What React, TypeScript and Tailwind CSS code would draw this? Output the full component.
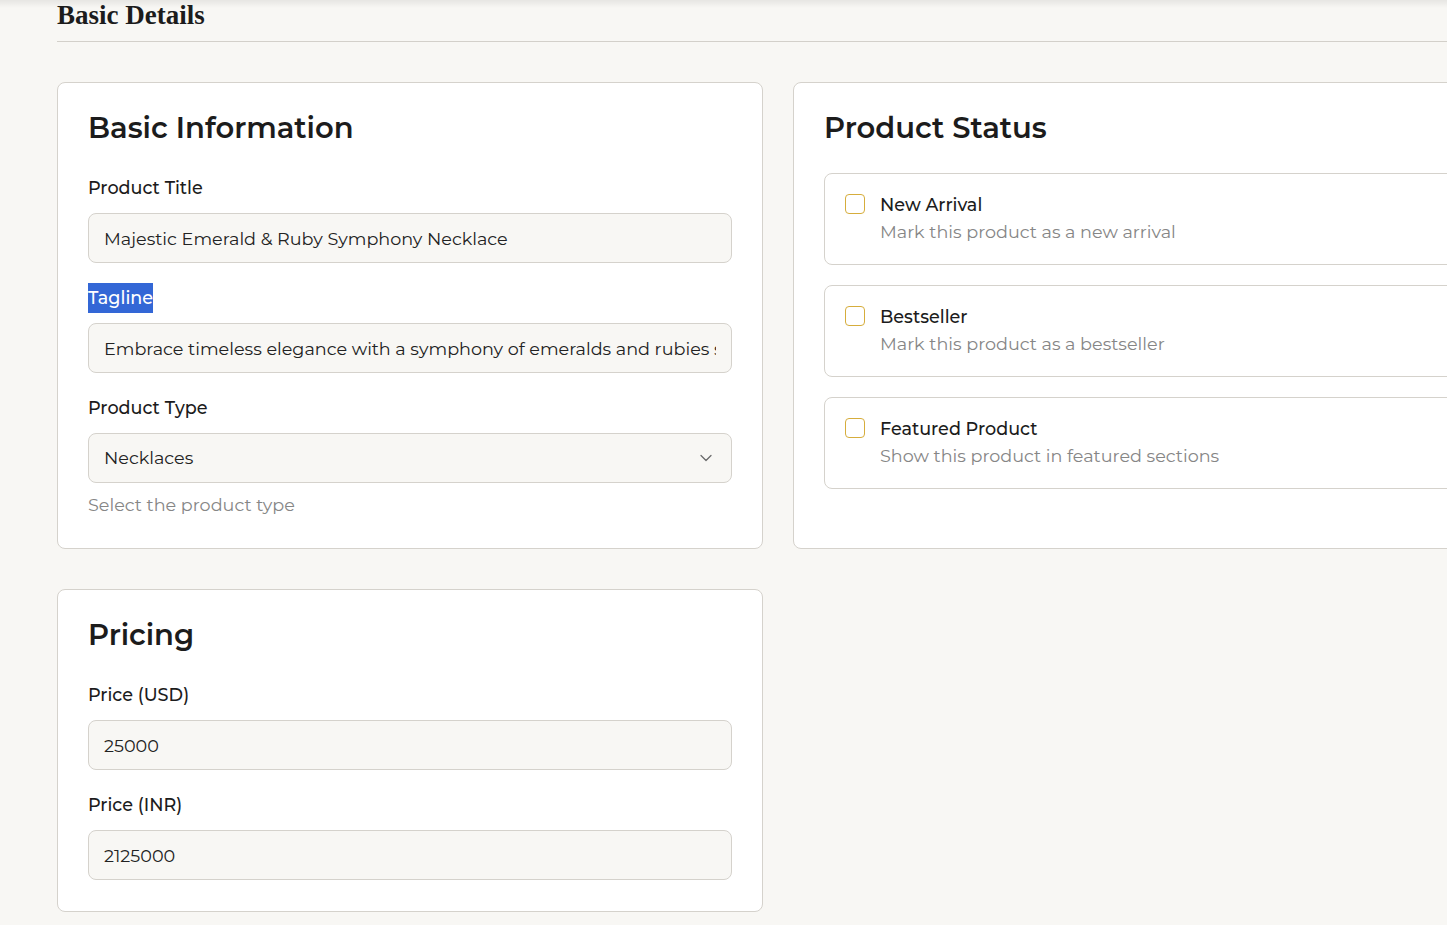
import React from "react";
import { ChevronDown } from "lucide-react";

const sans = "font-['Montserrat','Noto_Sans',sans-serif]";

function Field({ label, value, highlight }: { label: string; value: string; highlight?: boolean }) {
  return (
    <div className="flex flex-col">
      <label className="text-[17.6px] font-medium leading-[30px] text-[#1c1c1c] mb-2.5">
        {highlight ? <span className="inline-block bg-[#3367d6] leading-[30px] text-white">{label}</span> : label}
      </label>
      <input
        readOnly
        value={value}
        className="h-[50px] w-full rounded-lg border border-[#d5d2cc] bg-[#f8f7f4] px-[15px] text-[17.6px] text-[#222] outline-none"
      />
    </div>
  );
}

function Card({ title, children }: { title: string; children: React.ReactNode }) {
  return (
    <div className="rounded-lg border border-[#d5d2cc] bg-white px-[30px] pt-[27px] pb-[31px]">
      <h2 className="text-[29px] font-semibold leading-[36px] text-[#1c1c1c] mb-[27px]">{title}</h2>
      {children}
    </div>
  );
}

function StatusItem({ title, desc }: { title: string; desc: string }) {
  return (
    <div className="flex items-start rounded-lg border border-[#d5d2cc] bg-white px-5 pt-[19px] pb-[20px]">
      <div className="mt-[1px] h-5 w-5 shrink-0 rounded-[4px] border border-[#d6ad3c] bg-white" />
      <div className="ml-[15px] flex flex-col">
        <span className="text-[17.6px] font-medium leading-6 text-[#1c1c1c]">{title}</span>
        <span className="mt-[3px] text-[17.6px] leading-6 text-[#868686]">{desc}</span>
      </div>
    </div>
  );
}

export default function App() {
  return (
    <div className={`relative min-h-screen w-full overflow-hidden bg-[#f8f7f4] ${sans}`}>
      <div className="pointer-events-none absolute left-0 right-0 top-0 h-[8px] bg-gradient-to-b from-[rgba(0,0,0,0.07)] to-transparent" />
      <div className="ml-[57px] w-[1442px]">
        <div className="border-b border-[#d3d0ca] pb-[11px]">
          <h1 className="font-['Liberation_Serif','DejaVu_Serif',serif] text-[27px] font-bold leading-[30px] text-[#1c1c1c]">
            Basic Details
          </h1>
        </div>
        <div className="mt-10 grid grid-cols-2 gap-x-[30px] gap-y-[40px]">
          <Card title="Basic Information">
            <div className="flex flex-col gap-5">
              <Field label="Product Title" value="Majestic Emerald & Ruby Symphony Necklace" />
              <Field
                label="Tagline"
                highlight
                value="Embrace timeless elegance with a symphony of emeralds and rubies set in gold"
              />
              <div className="flex flex-col">
                <label className="text-[17.6px] font-medium leading-[30px] text-[#1c1c1c] mb-2.5">Product Type</label>
                <div className="flex h-[50px] items-center justify-between rounded-lg border border-[#d5d2cc] bg-[#f8f7f4] px-[15px]">
                  <span className="text-[17.6px] text-[#222]">Necklaces</span>
                  <ChevronDown size={20} strokeWidth={1.5} className="text-[#6b6b6b]" />
                </div>
                <p className="mt-2.5 text-[17.6px] leading-6 text-[#868686]">Select the product type</p>
              </div>
            </div>
          </Card>
          <Card title="Product Status">
            <div className="flex flex-col gap-5">
              <StatusItem title="New Arrival" desc="Mark this product as a new arrival" />
              <StatusItem title="Bestseller" desc="Mark this product as a bestseller" />
              <StatusItem title="Featured Product" desc="Show this product in featured sections" />
            </div>
          </Card>
          <Card title="Pricing">
            <div className="flex flex-col gap-5">
              <Field label="Price (USD)" value="25000" />
              <Field label="Price (INR)" value="2125000" />
            </div>
          </Card>
          <div />
        </div>
      </div>
    </div>
  );
}
